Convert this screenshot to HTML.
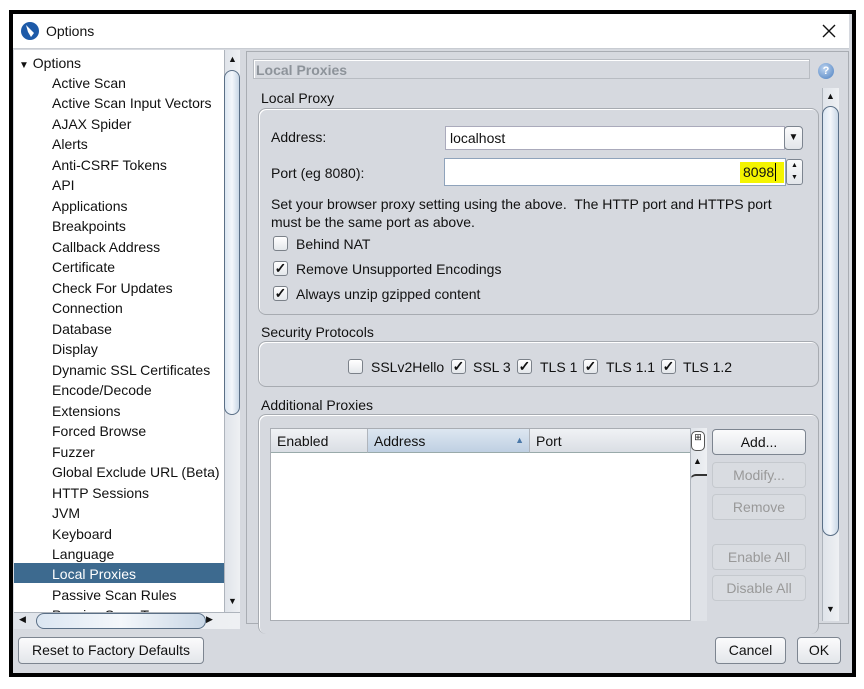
<!DOCTYPE html>
<html><head><style>
*{margin:0;padding:0;box-sizing:border-box}
body{width:864px;height:689px;background:#fff;position:relative;overflow:hidden;font-family:"Liberation Sans",Arial,sans-serif;font-size:14px;color:#111}
.a{position:absolute}
.frame{left:9px;top:10px;width:847px;height:667px;border:4px solid #000;background:#d6d9df}
.title{left:13px;top:14px;width:836px;height:35px;background:#fff;border-bottom:1px solid #c8ccd2}
.tree{left:14px;top:50px;width:210px;height:562px;background:#fff;overflow:hidden}
.tree div{position:absolute;left:38px;white-space:nowrap}
.sel{background:#3d6a8f;color:#fff}
.sb{background:linear-gradient(90deg,#e0e4ea,#eef0f3);border-left:1px solid #aeb4bc}
.thumb{border:1px solid #5a6f86;border-radius:10px;background:linear-gradient(90deg,#dbe6f2,#f4f7fb,#c9d7e6)}
.grp{border:1px solid #a7abb1;border-radius:8px;background:#d6d9df;box-shadow:inset 1px 1px 0 #fff}
.cb{position:absolute;width:15px;height:15px;border:1px solid #7b8189;border-radius:3px;background:linear-gradient(#fff,#e4e7eb);font-size:14px;line-height:13px;text-align:center;font-weight:bold}
.btn{position:absolute;border:1px solid #7d8590;border-radius:4px;background:linear-gradient(#fbfbfc,#e3e6ea);text-align:center}
.dis{border-color:#c5c9ce;color:#999;background:#d9dce1}
</style></head><body>
<div class="a frame"></div>
<div class="a title"></div>
<svg class="a" style="left:20px;top:21px" width="20" height="20" viewBox="0 0 20 20"><circle cx="10" cy="10" r="9" fill="#1d5aa8"/><path d="M6 4 L14 12 L11 16 L8 11 Z" fill="#fff"/></svg>
<div class="a" style="left:46px;top:23px;font-size:14px">Options</div>
<svg class="a" style="left:822px;top:24px" width="14" height="14" viewBox="0 0 14 14"><path d="M1 1L13 13M13 1L1 13" stroke="#111" stroke-width="1.4"/></svg>

<div class="a tree">
<div style="left:5px;top:5px"><span style="font-size:10px">▼</span> Options</div>
<div style="top:25px">Active Scan</div>
<div style="top:45px">Active Scan Input Vectors</div>
<div style="top:66px">AJAX Spider</div>
<div style="top:86px">Alerts</div>
<div style="top:107px">Anti-CSRF Tokens</div>
<div style="top:127px">API</div>
<div style="top:148px">Applications</div>
<div style="top:168px">Breakpoints</div>
<div style="top:189px">Callback Address</div>
<div style="top:209px">Certificate</div>
<div style="top:230px">Check For Updates</div>
<div style="top:250px">Connection</div>
<div style="top:271px">Database</div>
<div style="top:291px">Display</div>
<div style="top:312px">Dynamic SSL Certificates</div>
<div style="top:332px">Encode/Decode</div>
<div style="top:353px">Extensions</div>
<div style="top:373px">Forced Browse</div>
<div style="top:394px">Fuzzer</div>
<div style="top:414px">Global Exclude URL (Beta)</div>
<div style="top:435px">HTTP Sessions</div>
<div style="top:455px">JVM</div>
<div style="top:476px">Keyboard</div>
<div style="top:496px">Language</div>
<div class="sel" style="left:0;width:210px;top:513px;height:20px;padding:3px 0 0 38px">Local Proxies</div>
<div style="top:537px">Passive Scan Rules</div>
<div style="top:557px">Passive Scan Tags</div>
</div>
<div class="a sb" style="left:224px;top:50px;width:16px;height:562px"></div>
<div class="a" style="left:228px;top:54px;font-size:9px">▲</div>
<div class="a thumb" style="left:224px;top:70px;width:16px;height:345px"></div>
<div class="a" style="left:228px;top:596px;font-size:9px">▼</div>
<div class="a sb" style="left:14px;top:612px;width:226px;height:17px;border-left:0;border-top:1px solid #aeb4bc"></div>
<div class="a thumb" style="left:36px;top:613px;width:170px;height:16px"></div>
<div class="a" style="left:19px;top:614px;font-size:9px">◀</div>
<div class="a" style="left:206px;top:614px;font-size:9px">▶</div>

<div class="a" style="left:246px;top:51px;width:603px;height:573px;border:1px solid #a9adb3"></div>
<div class="a" style="left:253px;top:59px;width:557px;height:20px;border:1px solid #b8bcc2;box-shadow:inset 1px 1px 0 #fff;color:#8d939a;font-weight:bold;padding:2px 2px;font-size:14px">Local Proxies</div>
<div class="a" style="left:818px;top:63px;width:16px;height:16px;border-radius:50%;background:radial-gradient(circle at 40% 35%,#bcd3ef,#4b7fc0);color:#fff;font-size:11px;font-weight:bold;text-align:center;line-height:16px">?</div>

<div class="a sb" style="left:822px;top:88px;width:17px;height:533px"></div>
<div class="a" style="left:826px;top:91px;font-size:9px">▲</div>
<div class="a thumb" style="left:822px;top:106px;width:17px;height:430px"></div>
<div class="a" style="left:826px;top:604px;font-size:9px">▼</div>

<div class="a" style="left:261px;top:90px">Local Proxy</div>
<div class="a grp" style="left:258px;top:108px;width:561px;height:207px"></div>
<div class="a" style="left:271px;top:129px">Address:</div>
<div class="a" style="left:445px;top:126px;width:340px;height:24px;background:#fff;border:1px solid #aab;padding:3px 4px">localhost</div>
<div class="a btn" style="left:784px;top:126px;width:19px;height:24px;font-size:10px;line-height:22px">▼</div>
<div class="a" style="left:271px;top:165px">Port (eg 8080):</div>
<div class="a" style="left:444px;top:158px;width:342px;height:28px;background:#fff;border:1px solid #8fa3bb"></div>
<div class="a" style="left:740px;top:162px;width:44px;height:21px;background:#f4f400"></div>
<div class="a" style="left:743px;top:164px">8098</div>
<div class="a" style="left:775px;top:163px;width:1px;height:18px;background:#000"></div>
<div class="a btn" style="left:786px;top:159px;width:17px;height:26px;font-size:7px;line-height:12px;border-radius:3px">▲<br>▼</div>
<div class="a" style="left:271px;top:195px;line-height:18px">Set your browser proxy setting using the above.&nbsp; The HTTP port and HTTPS port<br>must be the same port as above.</div>
<div class="cb" style="left:273px;top:236px"></div><div class="a" style="left:296px;top:236px">Behind NAT</div>
<div class="cb" style="left:273px;top:261px">✓</div><div class="a" style="left:296px;top:261px">Remove Unsupported Encodings</div>
<div class="cb" style="left:273px;top:286px">✓</div><div class="a" style="left:296px;top:286px">Always unzip gzipped content</div>

<div class="a" style="left:261px;top:324px">Security Protocols</div>
<div class="a grp" style="left:258px;top:341px;width:561px;height:46px"></div>
<div class="cb" style="left:348px;top:359px"></div><div class="a" style="left:371px;top:359px">SSLv2Hello</div>
<div class="cb" style="left:451px;top:359px">✓</div><div class="a" style="left:473px;top:359px">SSL 3</div>
<div class="cb" style="left:517px;top:359px">✓</div><div class="a" style="left:540px;top:359px">TLS 1</div>
<div class="cb" style="left:583px;top:359px">✓</div><div class="a" style="left:606px;top:359px">TLS 1.1</div>
<div class="cb" style="left:661px;top:359px">✓</div><div class="a" style="left:683px;top:359px">TLS 1.2</div>

<div class="a" style="left:261px;top:397px">Additional Proxies</div>
<div class="a grp" style="left:258px;top:414px;width:561px;height:220px;border-bottom:0"></div>
<div class="a" style="left:270px;top:428px;width:421px;height:193px;background:#fff;border:1px solid #a9adb3"></div>
<div class="a" style="left:271px;top:429px;width:97px;height:24px;background:linear-gradient(#f0f2f5,#dadee4);border-right:1px solid #b0b5bc;border-bottom:1px solid #9aa;padding:4px 6px">Enabled</div>
<div class="a" style="left:368px;top:429px;width:162px;height:24px;background:linear-gradient(#dde7f1,#bfd0e2);border-right:1px solid #b0b5bc;border-bottom:1px solid #9aa;padding:4px 6px">Address<span style="position:absolute;right:5px;top:6px;font-size:9px;color:#4a78a8">▲</span></div>
<div class="a" style="left:530px;top:429px;width:160px;height:24px;background:linear-gradient(#f0f2f5,#dadee4);border-bottom:1px solid #9aa;padding:4px 6px">Port</div>
<div class="a sb" style="left:690px;top:428px;width:17px;height:193px"></div>
<div class="a" style="left:691px;top:431px;width:14px;height:20px;border:1px solid #555;border-radius:5px;background:#fff;font-size:9px;text-align:center">⊞</div>
<div class="a" style="left:693px;top:456px;font-size:9px">▲</div>
<div class="a" style="left:690px;top:474px;width:17px;height:147px;background:#dfe2e7;border-left:1px solid #aeb4bc;border-top:2px solid #333;border-radius:6px 0 0 0"></div>
<div class="btn" style="left:712px;top:429px;width:94px;height:26px;line-height:24px">Add...</div>
<div class="btn dis" style="left:712px;top:462px;width:94px;height:26px;line-height:24px">Modify...</div>
<div class="btn dis" style="left:712px;top:494px;width:94px;height:26px;line-height:24px">Remove</div>
<div class="btn dis" style="left:712px;top:544px;width:94px;height:26px;line-height:24px">Enable All</div>
<div class="btn dis" style="left:712px;top:575px;width:94px;height:26px;line-height:24px">Disable All</div>

<div class="btn" style="left:18px;top:637px;width:186px;height:27px;line-height:25px">Reset to Factory Defaults</div>
<div class="btn" style="left:715px;top:637px;width:71px;height:27px;line-height:25px">Cancel</div>
<div class="btn" style="left:797px;top:637px;width:44px;height:27px;line-height:25px">OK</div>
</body></html>
